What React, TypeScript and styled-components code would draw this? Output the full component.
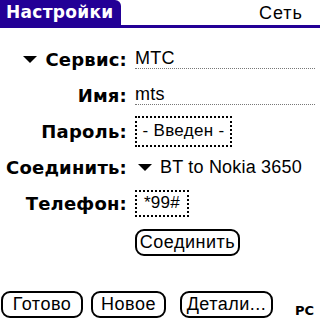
import React from 'react';
import styled, { createGlobalStyle } from 'styled-components';

const Global = createGlobalStyle`
    html, body {
        margin: 0;
        padding: 0;
        background: #fff;
    }
    body {
        font-family: "Liberation Sans", Arial, sans-serif;
        color: #000;
    }
`;

const ink = '#230096';

const Screen = styled.div`
    width: 320px;
    height: 320px;
    display: flex;
    flex-direction: column;
    overflow: hidden;
`;
const TitleBar = styled.div`
    height: 28px;
    display: flex;
    align-items: stretch;
    box-sizing: border-box;
    border-bottom: 3px solid ${ink};
`;
const Tab = styled.div`
    background: ${ink};
    color: #fff;
    font-family: "DejaVu Sans", sans-serif;
    font-weight: bold;
    font-size: 17px;
    line-height: 25px;
    padding: 0 7px 0 6px;
    border-top-right-radius: 6px;
    letter-spacing: 0.3px;
`;
const Section = styled.div`
    margin-left: auto;
    margin-right: 17px;
    font-size: 18px;
    line-height: 26px;
    letter-spacing: 1px;
`;
const Form = styled.div`
    display: grid;
    grid-template-columns: 127px 1fr;
    grid-auto-rows: 36px;
    column-gap: 8px;
    padding: 13px 5px 0 0;
    align-items: center;
`;
const Label = styled.div`
    display: flex;
    justify-content: flex-end;
    align-items: center;
    gap: 8px;
    font-family: "DejaVu Sans", sans-serif;
    font-weight: bold;
    font-size: 18px;
    letter-spacing: 0.2px;
    white-space: nowrap;
`;
const Field = styled.div`
    font-size: 18px;
    line-height: 17px;
    padding-bottom: 1px;
    border-bottom: 1px dotted #777;
    letter-spacing: 0.3px;
`;
const Box = styled.div<{ w: number; h: number }>`
    width: ${p => p.w}px;
    height: ${p => p.h}px;
    box-sizing: border-box;
    border: 2px dotted #000;
    display: flex;
    align-items: center;
    justify-content: center;
    font-size: 17px;
    letter-spacing: 0.3px;
`;
const Picker = styled.div`
    display: flex;
    align-items: center;
    gap: 8px;
    padding-left: 3px;
    font-size: 18px;
    letter-spacing: 0.2px;
`;
const Button = styled.div<{ w: number }>`
    width: ${p => p.w}px;
    height: 27px;
    box-sizing: border-box;
    border: 2px solid #000;
    border-radius: 9px;
    display: flex;
    align-items: center;
    justify-content: center;
    font-size: 18px;
    letter-spacing: 0.5px;
`;
const ConnectRow = styled.div`
    padding: 8px 0 0 135px;
`;
const Footer = styled.div`
    margin-top: auto;
    display: flex;
    align-items: center;
    padding: 0 0 2px 1px;
`;
const Mode = styled.div`
    margin-left: auto;
    margin-right: 6px;
    align-self: flex-end;
    font-family: "DejaVu Sans", sans-serif;
    font-weight: bold;
    font-size: 13px;
    line-height: 14px;
`;

function Arrow() {
    return (
        <svg width="14" height="7" viewBox="0 0 14 7">
            <polygon points="0,0 14,0 7,7" fill="#000" />
        </svg>
    );
}

function App(): JSX.Element {
    return (
        <Screen>
            <Global />
            <TitleBar>
                <Tab>Настройки</Tab>
                <Section>Сеть</Section>
            </TitleBar>

            <Form>
                <Label><Arrow />Сервис:</Label>
                <Field>MTC</Field>

                <Label>Имя:</Label>
                <Field>mts</Field>

                <Label>Пароль:</Label>
                <Box w={97} h={31}>- Введен -</Box>

                <Label>Соединить:</Label>
                <Picker><Arrow />BT to Nokia 3650</Picker>

                <Label>Телефон:</Label>
                <Box w={54} h={27}>*99#</Box>
            </Form>

            <ConnectRow>
                <Button w={105}>Соединить</Button>
            </ConnectRow>

            <Footer>
                <Button w={82}>Готово</Button>
                <Button w={75} style={{ marginLeft: 8 }}>Новое</Button>
                <Button w={93} style={{ marginLeft: 14 }}>Детали...</Button>
                <Mode>PC</Mode>
            </Footer>
        </Screen>
    );
}

export default App;
